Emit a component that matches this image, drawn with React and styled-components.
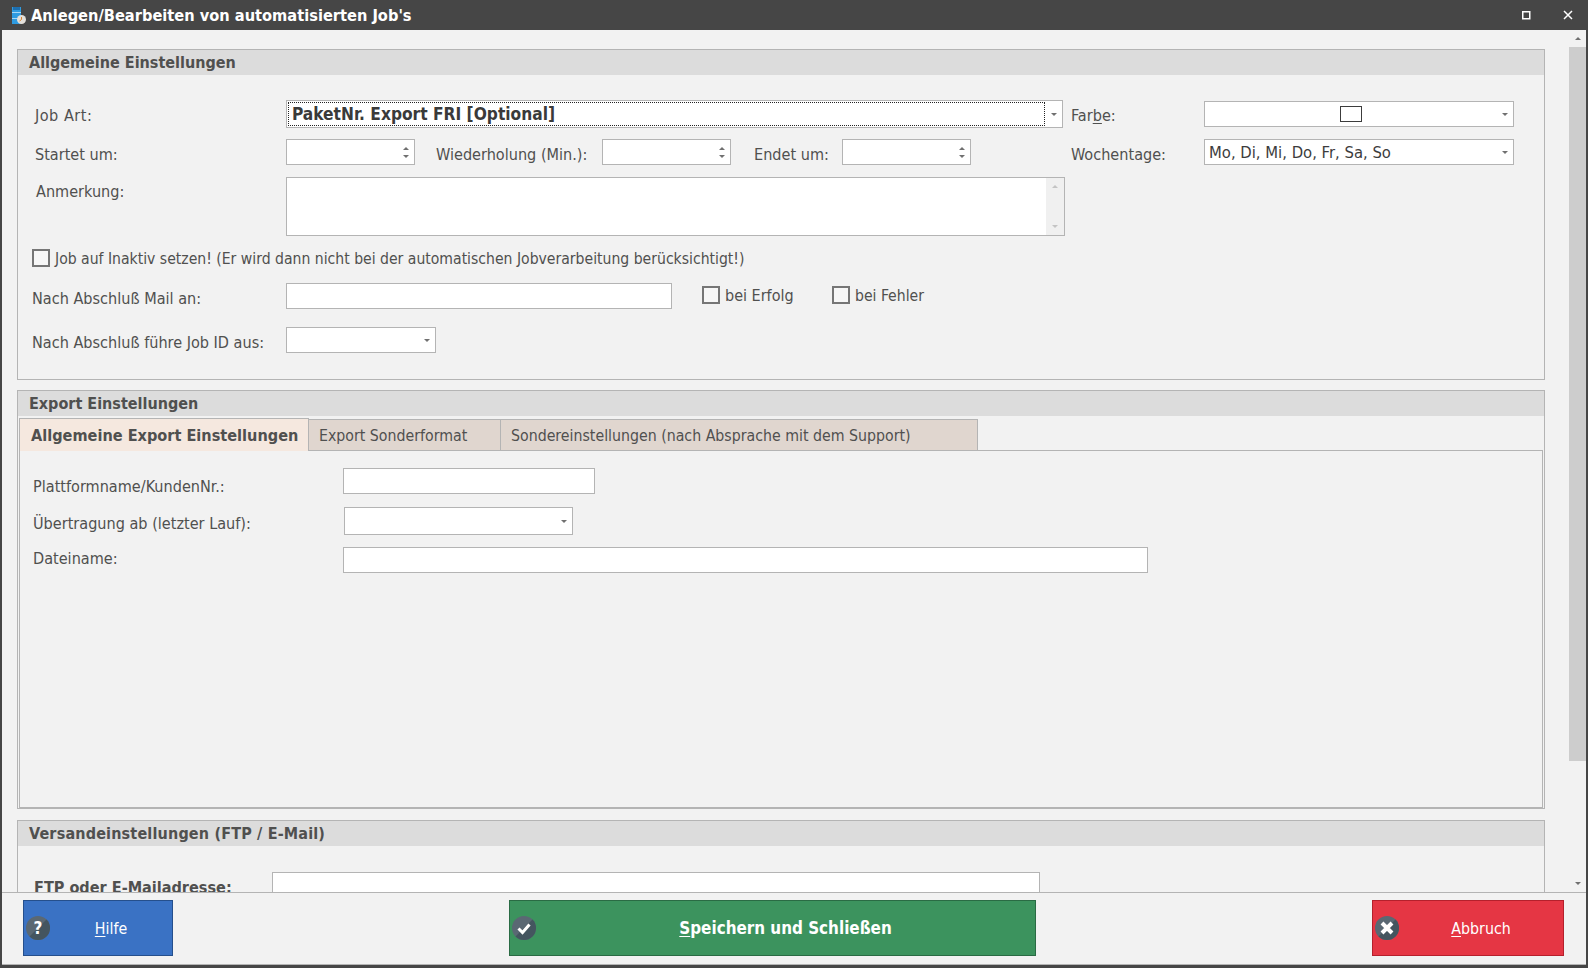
import React from 'react'
import styled, { createGlobalStyle } from 'styled-components'

const Global = createGlobalStyle`
  html, body { margin: 0; padding: 0; overflow: hidden; background: #f2f2f2; }
  * { box-sizing: border-box; }
`

const Win = styled.div`
  width: 1588px;
  height: 968px;
  display: flex;
  flex-direction: column;
  background: #f2f2f2;
  border-left: 2px solid #464646;
  border-right: 2px solid #464646;
  border-bottom: 3px solid #464646;
  font-family: "DejaVu Sans Condensed", "DejaVu Sans", sans-serif;
  font-size: 16.1px;
  color: #50504f;
  overflow: hidden;
`

const TitleBar = styled.div`
  height: 30px;
  margin: 0 -2px;
  flex: none;
  background: #464646;
  color: #fff;
  display: flex;
  align-items: center;
  padding-left: 12px;
  font-weight: bold;
  font-size: 16.25px;
`

const TitleText = styled.span`
  margin-left: 4px;
  flex: 1;
`

const WinBtn = styled.button`
  width: 42px;
  height: 30px;
  background: none;
  border: 0;
  padding: 0 0 0 2px;
  display: flex;
  align-items: center;
  justify-content: center;
`

const Main = styled.div`
  flex: 1;
  min-height: 0;
  display: flex;
  overflow: hidden;
`

const Scroller = styled.div`
  flex: 1;
  padding: 19px 24px 0 15px;
  overflow: hidden;
`

const ScrollTrack = styled.div`
  width: 17px;
  flex: none;
  display: flex;
  flex-direction: column;
`

const Thumb = styled.div`
  height: 714px;
  flex: none;
  background: #cdcdcd;
`

const Arrow = styled.i`
  display: block;
  width: 0;
  height: 0;
  border-left: ${p => p.$size || 3}px solid transparent;
  border-right: ${p => p.$size || 3}px solid transparent;
  ${p => (p.$up ? 'border-bottom' : 'border-top')}: ${p => (p.$size || 3)}px solid ${p => p.$color || '#707070'};
`

const ScrollArrowBox = styled.div`
  height: 17px;
  flex: none;
  margin-top: ${p => (p.$end ? 'auto' : 0)};
  display: flex;
  align-items: center;
  justify-content: center;
`

const Group = styled.section`
  border: 1px solid #b4b4b4;
  height: ${p => p.$h}px;
  margin-bottom: ${p => p.$mb || 0}px;
`

const GroupHead = styled.h2`
  margin: 0;
  height: 25px;
  background: #dcdcdc;
  padding-left: 11px;
  font-size: 16px;
  line-height: 25px;
  font-weight: bold;
  letter-spacing: ${p => p.$ls || 0}px;
  color: #50504f;
`

const Row = styled.div`
  display: flex;
  align-items: flex-start;
  height: ${p => p.$h || 26}px;
  margin-top: ${p => p.$mt || 0}px;
  padding-left: ${p => p.$pl || 0}px;
`

const Label = styled.label`
  width: ${p => p.$w}px;
  flex: none;
  line-height: 20px;
  padding-top: ${p => p.$pt ?? 6}px;
  padding-left: ${p => p.$pl || 0}px;
  font-weight: ${p => (p.$bold ? 'bold' : 'normal')};
  letter-spacing: ${p => p.$ls || 0}px;
  white-space: nowrap;
`

const Field = styled.div`
  width: ${p => p.$w}px;
  height: ${p => p.$h || 26}px;
  flex: none;
  background: #fff;
  border: 1px solid #b4b4b4;
  display: flex;
  align-items: center;
  margin-top: ${p => p.$mt || 0}px;
  color: #3c3c3c;
`

const FieldValue = styled.span`
  flex: 1;
  padding-left: 4px;
  font-size: 16.5px;
  white-space: nowrap;
`

const DropButton = styled.span`
  width: 17px;
  flex: none;
  padding-left: 1px;
  display: flex;
  justify-content: center;
`

const SpinBox = styled.span`
  width: 17px;
  flex: none;
  padding-left: 1px;
  display: flex;
  flex-direction: column;
  align-items: center;
  gap: 5px;
`

const FocusValue = styled.span`
  flex: 1;
  height: 24px;
  margin-left: 1px;
  border: 1px dotted #222;
  padding-left: 3px;
  font-weight: bold;
  font-size: 17.2px;
  line-height: 22px;
  color: #3a3a3a;
  white-space: nowrap;
`

const Swatch = styled.span`
  width: 22px;
  height: 16px;
  border: 1px solid #3c3c3c;
  background: #fff;
`

const SwatchCell = styled.span`
  flex: 1;
  display: flex;
  justify-content: center;
`

const MemoBar = styled.span`
  width: 18px;
  height: 100%;
  margin-left: auto;
  background: #f0f0f0;
  display: flex;
  flex-direction: column;
  align-items: center;
  justify-content: space-between;
  padding: 7px 0;
`

const CheckBox = styled.span`
  width: 18px;
  height: 18px;
  flex: none;
  border: 2px solid #767676;
  background: #f7f7f7;
`

const Check = styled.label`
  display: flex;
  align-items: center;
  gap: 5px;
  width: ${p => p.$w || 'auto'};
  margin-left: ${p => p.$ml || 0}px;
  margin-top: ${p => p.$mt || 0}px;
  white-space: nowrap;
`

const CheckText = styled.span`
  padding-top: ${p => p.$pt || 2}px;
  line-height: 20px;
  font-size: ${p => p.$fs || 16}px;
`

const Tabs = styled.div`
  display: flex;
  height: 35px;
  margin: 0 0 0 1px;
  padding-top: 2px;
  align-items: flex-end;
  position: relative;
`

const Tab = styled.div`
  height: ${p => (p.$active ? 33 : 32)}px;
  width: ${p => p.$w}px;
  padding-left: ${p => (p.$active ? 11 : 10)}px;
  line-height: ${p => (p.$active ? 34 : 32)}px;
  background: ${p => (p.$active ? '#f5e8df' : '#e0d6cf')};
  border: 1px solid #b4b4b4;
  border-bottom: ${p => (p.$active ? 0 : '1px solid #b4b4b4')};
  border-left-width: ${p => (p.$active ? 1 : 0)}px;
  font-weight: ${p => (p.$active ? 'bold' : 'normal')};
  font-size: ${p => (p.$active ? 16.15 : 15.75)}px;
  white-space: nowrap;
`

const TabPanel = styled.div`
  height: 358px;
  margin: -1px 1px 0;
  border: 1px solid #b4b4b4;
  padding-left: 13px;
`

const Footer = styled.div`
  height: 73px;
  flex: none;
  border-top: 1px solid #b4b4b4;
  border-bottom: 1px solid #b4b4b4;
  display: flex;
  padding: 7px 22px 0 21px;
  justify-content: space-between;
`

const ActionButton = styled.button`
  width: ${p => p.$w}px;
  height: 56px;
  background: ${p => p.$bg};
  border: 1px solid ${p => p.$line};
  color: #fff;
  font: inherit;
  font-weight: ${p => (p.$bold ? 'bold' : 'normal')};
  font-size: ${p => (p.$bold ? 16.9 : 15.8)}px;
  padding: 0 0 0 26px;
  display: flex;
  align-items: center;
  justify-content: center;
  position: relative;
`

const ButtonIcon = styled.svg`
  position: absolute;
  left: 1px;
  top: 14px;
`

const Key = styled.span`
  text-decoration: underline;
  text-underline-offset: 2px;
`

const Round = ({ children }) => (
  <ButtonIcon width="26" height="26" viewBox="0 0 26 26">
    <circle cx="13" cy="13" r="12" fill="#5a6873" />
    <path d="M21.5 4.5A12 12 0 0 1 4.5 21.5Z" fill="#44555f" />
    {children}
  </ButtonIcon>
)

const Select = ({ w, mt, h, children }) => (
  <Field $w={w} $mt={mt} $h={h}>
    <FieldValue>{children}</FieldValue>
    <DropButton><Arrow /></DropButton>
  </Field>
)

const Spinner = () => (
  <Field $w={129}>
    <FieldValue />
    <SpinBox>
      <Arrow $up />
      <Arrow />
    </SpinBox>
  </Field>
)

export default function App() {
  return (
    <Win>
      <Global />
      <TitleBar>
        <svg width="15" height="17" viewBox="0 0 15 17">
          <rect x="0" y="0" width="9" height="17" fill="#2f9be0" />
          <rect x="0" y="5" width="9" height="1" fill="#a7d8f5" />
          <rect x="0" y="11" width="9" height="1" fill="#a7d8f5" />
          <rect x="1" y="0" width="7" height="3" fill="#1d6fb0" />
          <circle cx="9.5" cy="12.5" r="4.5" fill="#e4e0da" />
          <path d="M9.5 10V12.5L7.5 14" stroke="#d9822b" fill="none" />
        </svg>
        <TitleText>Anlegen/Bearbeiten von automatisierten Job's</TitleText>
        <WinBtn>
          <svg width="9" height="9" viewBox="0 0 9 9"><rect x=".75" y=".75" width="7" height="7" fill="none" stroke="#fff" strokeWidth="1.5" /></svg>
        </WinBtn>
        <WinBtn>
          <svg width="10" height="10" viewBox="0 0 10 10"><path d="M1 1l8 8M9 1l-8 8" stroke="#fff" strokeWidth="1.5" /></svg>
        </WinBtn>
      </TitleBar>
      <Main>
        <Scroller>
          <Group $h={331} $mb={10}>
            <GroupHead>Allgemeine Einstellungen</GroupHead>
            <Row $mt={25} $h={28} $pl={17}>
              <Label $w={251} $ls={0.5}>Job Art:</Label>
              <Field $w={777} $h={28}>
                <FocusValue>PaketNr. Export FRI [Optional]</FocusValue>
                <DropButton><Arrow /></DropButton>
              </Field>
              <Label $w={141} $pl={8}>Far<Key>b</Key>e:</Label>
              <Field $w={310} $mt={1}>
                <SwatchCell><Swatch /></SwatchCell>
                <DropButton><Arrow /></DropButton>
              </Field>
            </Row>
            <Row $mt={11} $pl={17}>
              <Label $w={251}>Startet um:</Label>
              <Spinner />
              <Label $w={187} $pl={21}>Wiederholung (Min.):</Label>
              <Spinner />
              <Label $w={111} $pl={23}>Endet um:</Label>
              <Spinner />
              <Label $w={233} $pl={100}>Wochentage:</Label>
              <Select w={310}>Mo, Di, Mi, Do, Fr, Sa, So</Select>
            </Row>
            <Row $mt={12} $h={59} $pl={18}>
              <Label $w={250} $pt={5}>Anmerkung:</Label>
              <Field $w={779} $h={59}>
                <MemoBar>
                  <Arrow $up $size={3.5} $color="#c4c4c4" />
                  <Arrow $size={3.5} $color="#c4c4c4" />
                </MemoBar>
              </Field>
            </Row>
            <Row $mt={11} $h={19} $pl={14}>
              <Check><CheckBox /><CheckText $fs={15.6}>Job auf Inaktiv setzen! (Er wird dann nicht bei der automatischen Jobverarbeitung berücksichtigt!)</CheckText></Check>
            </Row>
            <Row $mt={17} $pl={14}>
              <Label $w={254}>Nach Abschluß Mail an:</Label>
              <Field $w={386} />
              <Check $ml={30} $mt={1} $w="130px"><CheckBox /><CheckText>bei Erfolg</CheckText></Check>
              <Check $mt={1}><CheckBox /><CheckText $fs={15.6}>bei Fehler</CheckText></Check>
            </Row>
            <Row $mt={18} $pl={14}>
              <Label $w={254}>Nach Abschluß führe Job ID aus:</Label>
              <Select w={150} />
            </Row>
          </Group>

          <Group $h={419} $mb={11}>
            <GroupHead>Export Einstellungen</GroupHead>
            <Tabs>
              <Tab $active $w={290}>Allgemeine Export Einstellungen</Tab>
              <Tab $w={192}>Export Sonderformat</Tab>
              <Tab $w={477}>Sondereinstellungen (nach Absprache mit dem Support)</Tab>
            </Tabs>
            <TabPanel>
              <Row $mt={17} $h={26}>
                <Label $w={310} $pt={9}>Plattformname/KundenNr.:</Label>
                <Field $w={252} />
              </Row>
              <Row $mt={13} $h={28}>
                <Label $w={311} $pt={7}>Übertragung ab (letzter Lauf):</Label>
                <Select w={229} h={28} />
              </Row>
              <Row $mt={12} $h={26}>
                <Label $w={310} $pt={2}>Dateiname:</Label>
                <Field $w={805} />
              </Row>
            </TabPanel>
          </Group>

          <Group $h={200}>
            <GroupHead $ls={0.17}>Versandeinstellungen (FTP / E-Mail)</GroupHead>
            <Row $mt={26} $pl={16}>
              <Label $w={238} $bold>FTP oder E-Mailadresse:</Label>
              <Field $w={768} />
            </Row>
          </Group>
        </Scroller>
        <ScrollTrack>
          <ScrollArrowBox><Arrow $up $size={3.5} /></ScrollArrowBox>
          <Thumb />
          <ScrollArrowBox $end><Arrow $size={3.5} /></ScrollArrowBox>
        </ScrollTrack>
      </Main>
      <Footer>
        <ActionButton $w={150} $bg="#3a72c4" $line="#254f8c">
          <Round>
            <text x="13" y="19" textAnchor="middle" fontSize="17" fontWeight="bold" fill="#fff">?</text>
          </Round>
          <span><Key>H</Key>ilfe</span>
        </ActionButton>
        <ActionButton $w={527} $bg="#3c935e" $line="#2a6b44" $bold>
          <Round>
            <path d="M7.5 13.5l4 4 7-8" fill="none" stroke="#fff" strokeWidth="3" />
          </Round>
          <span><Key>S</Key>peichern und Schließen</span>
        </ActionButton>
        <ActionButton $w={192} $bg="#e53644" $line="#b5202c">
          <Round>
            <path d="M8 8l10 10M18 8L8 18" fill="none" stroke="#fff" strokeWidth="4" />
          </Round>
          <span><Key>A</Key>bbruch</span>
        </ActionButton>
      </Footer>
    </Win>
  )
}
